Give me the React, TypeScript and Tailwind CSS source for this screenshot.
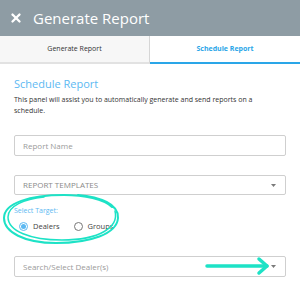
import { X } from 'lucide-react';

function Caret() {
  return (
    <svg width="5" height="3" viewBox="0 0 5 3" className="shrink-0">
      <path d="M0 0 L5 0 L2.5 3 Z" fill="#7a7a7a" />
    </svg>
  );
}

export default function App() {
  return (
    <div className="relative w-[300px] h-[289px] bg-white overflow-hidden" style={{ fontFamily: '"Open Sans", sans-serif' }}>
      {/* Header */}
      <div className="h-[36px] bg-[#8e9ca4] flex items-center pl-[9px] gap-[10px]">
        <X className="w-[14px] h-[14px] text-white" strokeWidth={4} />
        <span className="text-white text-[15px] leading-none">Generate Report</span>
      </div>

      {/* Tabs */}
      <div className="flex h-[28px]">
        <div className="w-1/2 bg-[#f7f7f7] border-r border-[#d6d6d6] border-b-2 border-b-[#e2e2e2] flex items-center justify-center text-[7px] text-[#333]">
          Generate Report
        </div>
        <div className="w-1/2 bg-white border-b-2 border-b-[#2aa6e8] flex items-center justify-center text-[7px] font-bold text-[#2aa6e8]">
          Schedule Report
        </div>
      </div>

      {/* Body */}
      <div className="px-[14px] pt-[12px]">
        <h2 className="text-[11px] leading-[15px] text-[#5cb9f2]">Schedule Report</h2>
        <p className="text-[7px] leading-[11px] text-[#333] mt-[3px] pr-[24px]">
          This panel will assist you to automatically generate and send reports on a schedule.
        </p>

        <div className="mt-[19px] h-[21px] border border-[#cfcfcf] rounded-[2px] flex items-center px-[8px] text-[8px] text-[#9a9a9a]">
          Report Name
        </div>

        <div className="mt-[19px] h-[20px] border border-[#cfcfcf] rounded-[2px] flex items-center justify-between pl-[8px] pr-[9px] text-[8px] text-[#8a8a8a]">
          <span>REPORT TEMPLATES</span>
          <Caret />
        </div>

        <div className="mt-[11px] text-[7px] leading-[10px] text-[#5cb9f2]">Select Target:</div>
        <div className="flex items-center mt-[5px] pl-[5px] text-[7.5px] text-[#444]">
          <span className="w-[9px] h-[9px] rounded-full border border-[#5cb9f2] flex items-center justify-center">
            <span className="w-[5px] h-[5px] rounded-full bg-[#5cb9f2]" />
          </span>
          <span className="ml-[5px]">Dealers</span>
          <span className="ml-[14px] w-[9px] h-[9px] rounded-full border border-[#777]" />
          <span className="ml-[5px]">Groups</span>
        </div>

        <div className="mt-[24px] h-[21px] border border-[#cfcfcf] rounded-[2px] flex items-center justify-between pl-[8px] pr-[9px] text-[8px] text-[#9a9a9a]">
          <span>Search/Select Dealer(s)</span>
          <Caret />
        </div>
      </div>

      {/* Annotations */}
      <svg className="absolute left-0 top-0 pointer-events-none" width="300" height="289">
        <path d="M78 195 C 100 197, 119 204, 118 218 C 117 234, 90 243, 56 243 C 24 243, 4 232, 4 218 C 4 203, 30 195, 64 195 C 84 195, 104 199, 112 207"
          fill="none" stroke="#1de2c6" strokeWidth="2" strokeLinecap="round" />
        <path d="M115 211 C 119 227, 100 240, 62 240 C 30 240, 8 231, 8 217 C 8 206, 24 199, 44 197"
          fill="none" stroke="#1de2c6" strokeWidth="1.5" strokeLinecap="round" />
        <path d="M207 266 L267 266" stroke="#1de2c6" strokeWidth="3.5" strokeLinecap="round" />
        <path d="M259 259 L267 266 L259 273" fill="none" stroke="#1de2c6" strokeWidth="3.5" strokeLinecap="round" strokeLinejoin="round" />
      </svg>
    </div>
  );
}
